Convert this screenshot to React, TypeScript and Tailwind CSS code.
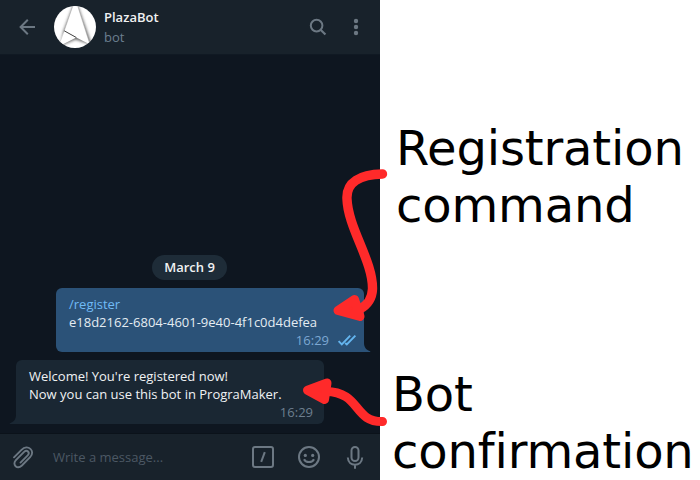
import React from "react";

const stroke = "stroke-[#6c7883]";

function BackIcon() {
  return (
    <svg className={`h-[54px] w-[54px] fill-none ${stroke}`} viewBox="0 0 54 54" strokeWidth="2">
      <path d="M35 27H20.5M27.8 19.8l-7.2 7.2 7.2 7.2" />
    </svg>
  );
}

function Avatar() {
  return (
    <svg className="h-[42px] w-[42px]" viewBox="0 0 42 42">
      <defs>
        <clipPath id="disc"><circle cx="21" cy="21" r="21" /></clipPath>
        <filter id="soft" x="-30%" y="-30%" width="160%" height="160%"><feGaussianBlur stdDeviation="1.7" /></filter>
      </defs>
      <g clipPath="url(#disc)">
        <rect width="42" height="42" fill="#fff" />
        <path d="M19.5 0h4L37 38 21.5 33 7 39l3-14z" fill="#6a6a6a" stroke="#6a6a6a" strokeWidth="1" filter="url(#soft)" />
        <path d="M18.8 0h4.9L36 38.5 22.3 31.5 10.2 24.8z" fill="#fff" />
        <path d="M10.2 24.8l12.1 6.7L7.5 39 5 36z" fill="#fff" />
        <path d="M23.7 0L36 38.5M18.8 0l-8.6 24.8L6 36" fill="none" stroke="#a8a8a8" strokeWidth=".5" />
        <path d="M10.2 24.8l12.1 6.7" stroke="#333" strokeWidth=".9" />
      </g>
    </svg>
  );
}

function Header() {
  return (
    <header className="flex h-[55px] shrink-0 items-start border-b border-[#101923] bg-[#18222b]">
      <BackIcon />
      <div className="pt-[6px]"><Avatar /></div>
      <div className="flex flex-1 flex-col gap-[2px] pt-[8px] pl-2">
        <div className="h-[18px] font-semibold text-[#f0f1f2]">PlazaBot</div>
        <div className="h-[18px] text-[#6c7f90]">bot</div>
      </div>
      <svg className={`h-[54px] w-[76px] fill-none ${stroke}`} viewBox="304 0 76 54">
        <circle cx="316.6" cy="25.6" r="5.8" strokeWidth="2" />
        <path d="M320.6 29.7l4.8 4.8" strokeWidth="2.2" />
        <g className="fill-[#6c7883]" stroke="none">
          <circle cx="356" cy="21" r="2.2" /><circle cx="356" cy="27" r="2.2" /><circle cx="356" cy="33" r="2.2" />
        </g>
      </svg>
    </header>
  );
}

function Outgoing() {
  return (
    <div className="mt-2 ml-[56px] flex h-[64px]">
      <div className="w-[308px] rounded-[6px] rounded-br-none bg-[#2b5278] px-[13px] py-[7px] text-[#e4ecf2]">
        <div className="text-[#70baf5]">/register</div>
        <div className="whitespace-nowrap">e18d2162-6804-4601-9e40-4f1c0d4defea</div>
        <div className="flex justify-end text-[#7da8d3]">
          16:29
          <svg className="-mr-[6px] ml-[8px] h-[18px] w-5 fill-none stroke-[#64b5ef]" viewBox="337 331 20 18" strokeWidth="1.9">
            <path d="M338.6 341.2l3.2 3.3 8.4-8.9M345.2 343l1.6 1.5 8.6-8.9" />
          </svg>
        </div>
      </div>
      <svg className="h-[64px] w-[7px]" viewBox="0 0 7 64"><path d="M0 55c0 4 2 7 6.5 8.4L6 64H0z" fill="#2b5278" /></svg>
    </div>
  );
}

function Incoming() {
  return (
    <div className="mt-2 ml-[9px] flex h-[64px]">
      <svg className="h-[64px] w-[7px]" viewBox="0 0 7 64"><path d="M7 55c0 4-2 7-6.5 8.4L1 64h6z" fill="#1a2733" /></svg>
      <div className="w-[308px] rounded-[6px] rounded-bl-none bg-[#1a2733] py-[7px] pr-[11px] pl-[13px] text-[#f0f2f3]">
        <div>Welcome! You're registered now!</div>
        <div className="whitespace-nowrap">Now you can use this bot in PrograMaker.</div>
        <div className="text-right text-[#6d7f8f]">16:29</div>
      </div>
    </div>
  );
}

function Composer() {
  return (
    <footer className="flex h-[47px] shrink-0 border-t border-[#0b121a] bg-[#18222b]">
      <svg className={`h-[46px] w-[53px] fill-none ${stroke}`} viewBox="0 434 53 46" strokeWidth="1.9" strokeLinecap="round">
        <path d="M14 457.3l7.5-7.5c6.3-6.2 14.5 1.2 8.6 7.4l-8.2 8.3c-4.6 4.4-10.2-.7-6-5.3l8.2-8.3c3-2.7 6.3.6 3.6 3.5l-7.2 7.2" />
      </svg>
      <div className="flex-1 pt-[14px] text-[#4c5864]">Write a message...</div>
      <svg className={`h-[46px] w-[132px] fill-none ${stroke}`} viewBox="248 434 132 46" strokeWidth="2">
        <rect x="253" y="447" width="20" height="20" rx="2" />
        <path d="M264.8 452.2l-3.6 9.6" strokeWidth="2" />
        <circle cx="309" cy="457" r="10" />
        <path d="M304 459.2c1.8 3.8 8.2 3.8 10 0" />
        <g className="fill-[#6c7883]" stroke="none"><circle cx="305.3" cy="455.4" r="1.6" /><circle cx="312.7" cy="455.4" r="1.6" /></g>
        <rect x="351.5" y="447" width="7" height="14" rx="3.5" />
        <path d="M347.8 457.5c.4 9.6 14 9.6 14.4 0M355 464.5v4.3" />
      </svg>
    </footer>
  );
}

function Arrows() {
  return (
    <svg className="pointer-events-none absolute inset-0 h-full w-full" viewBox="0 0 700 480" fill="none" stroke="#ff2a2a" strokeLinecap="round" strokeLinejoin="round">
      <path d="M382.5 174C360 174.5 346 182 347 199C348 228 373 261 372.5 289C372 300 367 305 360 309" strokeWidth="9.4" />
      <path d="M354.5 299.5L338 310.5L360 316.5Z" fill="#ff2a2a" strokeWidth="9" />
      <path d="M382.5 421.5C353 422 361 392 326 391.5" strokeWidth="9" />
      <path d="M327 383L307.5 390.2L324.5 399.5Z" fill="#ff2a2a" strokeWidth="9" />
    </svg>
  );
}

export default function App() {
  return (
    <div className="relative flex h-[480px] w-[700px] overflow-hidden bg-white">
      <main className="flex w-[380px] shrink-0 flex-col bg-[#0e1620] font-['Open_Sans',sans-serif] text-[13px] leading-[18px]">
        <Header />
        <section className="flex flex-1 flex-col justify-end pb-[9px]">
          <div className="ml-[152px] h-[25px] w-[75px] rounded-full bg-[#1e2c38] pt-[3px] text-center font-semibold text-[#f0f2f3]">March 9</div>
          <Outgoing />
          <Incoming />
        </section>
        <Composer />
      </main>
      <aside className="flex flex-1 flex-col pt-[120px] font-['DejaVu_Sans',sans-serif] text-[48px] leading-[57px] tracking-[-0.15px] text-black">
        <div className="h-[248px] pl-[16px]"><p>Registration</p><p>command</p></div>
        <div className="pl-[12px]"><p>Bot</p><p>confirmation</p></div>
      </aside>
      <Arrows />
    </div>
  );
}
